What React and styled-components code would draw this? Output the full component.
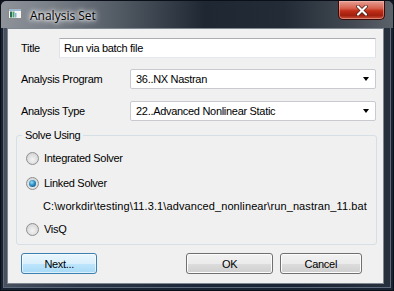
import React from "react";
import styled, { createGlobalStyle } from "styled-components";

const GlobalStyle = createGlobalStyle`
  html, body { margin: 0; padding: 0; background: #1a2433; overflow: hidden; }
  * { box-sizing: border-box; }
`;

const Window = styled.div`
  width: 394px;
  height: 291px;
  display: flex;
  flex-direction: column;
  background: linear-gradient(to right, #4a5260 0%, #2c3747 20%, #1b2738 50%, #1a2434 75%, #27313e 100%);
  box-shadow: inset 0 0 0 1px #0b1018, inset 0 0 0 3px #172233, inset 0 0 0 4px #5d6b7c;
  font-family: "Liberation Sans", Arial, sans-serif;
  font-size: 11px;
  letter-spacing: -0.3px;
  color: #000;
`;

const TitleBar = styled.div`
  height: 28px;
  display: flex;
  align-items: flex-start;
  border-radius: 6px 6px 0 0;
  border: 1px solid #0b1018;
  border-bottom: none;
  background: linear-gradient(to right, #8e939a 0%, #7b8189 12%, #525a64 30%, #1f2733 52%, #222b36 72%, #434a53 90%, #5b626a 100%);
`;

const AppIcon = styled.svg`
  margin: 7px 0 0 7px;
  flex: none;
`;

const Caption = styled.span`
  margin: 6px 0 0 8px;
  font-family: "Open Sans", "Liberation Sans", sans-serif;
  font-size: 12px;
  letter-spacing: 0;
  color: #000;
  text-shadow: 0 0 6px #fff, 0 0 6px #fff, 0 0 3px #fff;
`;

const CloseButton = styled.div`
  margin-left: auto;
  margin-right: 8px;
  width: 47px;
  height: 19px;
  border: 1px solid #3a0b06;
  border-top: none;
  border-radius: 0 0 5px 5px;
  background: linear-gradient(to bottom, #e4a094 0%, #d7624f 40%, #c02e17 55%, #a21f0e 80%, #c8543e 100%);
  box-shadow: inset 0 0 0 1px rgba(255, 200, 190, 0.45);
  display: flex;
  align-items: center;
  justify-content: center;
`;

const Body = styled.div`
  flex: 1;
  margin: 0 10px 7px 7px;
  background: #f0f0f0;
  border: 1px solid #7f8790;
  padding: 9px 6px 0 8px;
  display: flex;
  flex-direction: column;
`;

const FieldRow = styled.div`
  display: flex;
  align-items: center;
  padding: 0 1px 0 5px;
  margin-bottom: ${(p) => p.$gap}px;
`;

const Label = styled.span`
  width: ${(p) => p.$w}px;
  flex: none;
`;

const TextInput = styled.div`
  flex: 1;
  height: 20px;
  border: 1px solid #abadb3;
  border-color: #abadb3 #dbdfe6 #e3e9ef #e2e3ea;
  background: #fff;
  display: flex;
  align-items: center;
  padding-left: 4px;
`;

const Combo = styled.div`
  flex: 1;
  height: 20px;
  border: 1px solid #c8cacf;
  border-radius: 2px;
  background: #fff;
  display: flex;
  align-items: center;
  padding: 0 6px 0 5px;
  justify-content: space-between;
`;

const Arrow = styled.span`
  width: 0;
  height: 0;
  border-left: 3.5px solid transparent;
  border-right: 3.5px solid transparent;
  border-top: 4px solid #000;
`;

const Group = styled.div`
  position: relative;
  margin-top: 1px;
  height: 110px;
  border: 1px solid #d5dfe5;
  border-radius: 3px;
  padding: 15px 0 0 9px;
  display: flex;
  flex-direction: column;
`;

const Legend = styled.span`
  position: absolute;
  top: -7px;
  left: 5px;
  padding: 0 3px;
  background: #f0f0f0;
`;

const RadioRow = styled.div`
  display: flex;
  align-items: center;
  gap: 5px;
  height: 14px;
  margin-bottom: ${(p) => p.$gap}px;
`;

const RadioCircle = styled.span`
  width: 13px;
  height: 13px;
  border-radius: 50%;
  border: 1px solid #8f8f8f;
  background: radial-gradient(circle at 50% 60%, #f4f4f4 0%, #dcdcdc 60%, #cfcfcf 100%);
  display: flex;
  align-items: center;
  justify-content: center;
  flex: none;
  &::after {
    content: "";
    display: ${(p) => (p.$checked ? "block" : "none")};
    width: 7px;
    height: 7px;
    border-radius: 50%;
    background: radial-gradient(circle at 40% 35%, #9be0f8 0%, #2b8fc7 45%, #0e3f6b 100%);
  }
`;

const PathText = styled.div`
  padding-left: 17px;
  height: 14px;
  display: flex;
  align-items: center;
  margin-bottom: 9px;
  letter-spacing: 0.1px;
  white-space: nowrap;
`;

const ButtonRow = styled.div`
  display: flex;
  margin-top: 8px;
  padding: 0 15px 0 5px;
`;

const Button = styled.div`
  width: ${(p) => p.$w}px;
  height: 21px;
  margin-left: ${(p) => p.$ml || 0}px;
  border-radius: 3px;
  border: 1px solid ${(p) => (p.$default ? "#3c7fb1" : "#707070")};
  background: ${(p) =>
    p.$default
      ? "linear-gradient(to bottom, #eaf6fd 0%, #d9f0fc 50%, #bee6fd 51%, #a7d9f5 100%)"
      : "linear-gradient(to bottom, #f2f2f2 0%, #ebebeb 50%, #dddddd 51%, #cfcfcf 100%)"};
  box-shadow: inset 0 0 0 1px ${(p) => (p.$default ? "rgba(255,255,255,0.6)" : "#fcfcfc")};
  display: flex;
  align-items: center;
  justify-content: center;
`;

export default function App() {
  return (
    <>
      <GlobalStyle />
      <Window>
        <TitleBar>
          <AppIcon width="14" height="11" viewBox="0 0 14 11">
            <rect x="0.5" y="0.5" width="13" height="10" fill="#f4f4f4" stroke="#8a8a8a" />
            <rect x="1" y="1" width="12" height="2" fill="#9cb7cf" />
            <rect x="2" y="3.5" width="2" height="6" fill="#2c6e58" />
            <rect x="4.5" y="3.5" width="2" height="6" fill="#4fa36a" />
            <rect x="7" y="5" width="1.5" height="4.5" fill="#7fb3d8" />
          </AppIcon>
          <Caption>Analysis Set</Caption>
          <CloseButton>
            <svg width="12" height="11" viewBox="0 0 12 11">
              <path d="M2 1.5 L10 9.5 M10 1.5 L2 9.5" stroke="#4a1a12" strokeWidth="3.6" strokeLinecap="round" />
              <path d="M2 1.5 L10 9.5 M10 1.5 L2 9.5" stroke="#fff" strokeWidth="2.2" strokeLinecap="round" />
            </svg>
          </CloseButton>
        </TitleBar>
        <Body>
          <FieldRow $gap={11}>
            <Label $w={38}>Title</Label>
            <TextInput>Run via batch file</TextInput>
          </FieldRow>
          <FieldRow $gap={12}>
            <Label $w={109}>Analysis Program</Label>
            <Combo>
              <span>36..NX Nastran</span>
              <Arrow />
            </Combo>
          </FieldRow>
          <FieldRow $gap={13}>
            <Label $w={109}>Analysis Type</Label>
            <Combo>
              <span>22..Advanced Nonlinear Static</span>
              <Arrow />
            </Combo>
          </FieldRow>
          <Group>
            <Legend>Solve Using</Legend>
            <RadioRow $gap={11}>
              <RadioCircle />
              <span>Integrated Solver</span>
            </RadioRow>
            <RadioRow $gap={9}>
              <RadioCircle $checked />
              <span>Linked Solver</span>
            </RadioRow>
            <PathText>C:\workdir\testing\11.3.1\advanced_nonlinear\run_nastran_11.bat</PathText>
            <RadioRow $gap={0}>
              <RadioCircle />
              <span>VisQ</span>
            </RadioRow>
          </Group>
          <ButtonRow>
            <Button $w={78} $default>Next...</Button>
            <Button $w={88} $ml={89}>OK</Button>
            <Button $w={84} $ml={7}>Cancel</Button>
          </ButtonRow>
        </Body>
      </Window>
    </>
  );
}
